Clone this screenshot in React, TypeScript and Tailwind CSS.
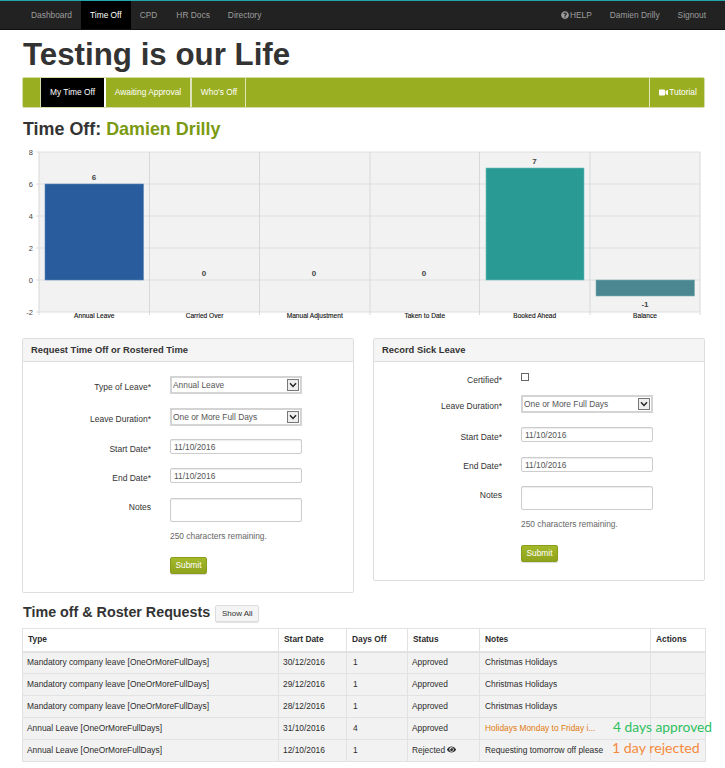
import React from "react";
import { FaQuestionCircle, FaVideo, FaEye } from "react-icons/fa";

const rows = [
  ["Mandatory company leave [OneOrMoreFullDays]", "30/12/2016", "1", "Approved", "Christmas Holidays"],
  ["Mandatory company leave [OneOrMoreFullDays]", "29/12/2016", "1", "Approved", "Christmas Holidays"],
  ["Mandatory company leave [OneOrMoreFullDays]", "28/12/2016", "1", "Approved", "Christmas Holidays"],
  ["Annual Leave [OneOrMoreFullDays]", "31/10/2016", "4", "Approved", "Holidays Monday to Friday i..."],
  ["Annual Leave [OneOrMoreFullDays]", "12/10/2016", "1", "Rejected", "Requesting tomorrow off please"],
];
const cellPad = ["pl-[4px]", "pl-[4px]", "pl-[6px]", "pl-[4px]", "pl-[5px]"];

function Chart() {
  const ys = [152, 184, 216, 248, 280, 312];
  const xs = [39, 149.5, 259.5, 370, 479.5, 590, 700];
  const labels = ["Annual Leave", "Carried Over", "Manual Adjustment", "Taken to Date", "Booked Ahead", "Balance"];
  const ticks = ["8", "6", "4", "2", "0", "-2"];
  const vals: [string, number, number][] = [
    ["6", 94, 178],
    ["0", 204, 274],
    ["0", 314, 274],
    ["0", 424, 274],
    ["7", 534.5, 162],
    ["-1", 645, 305],
  ];
  return (
    <svg viewBox="22 145 683 175" className="block w-[683px] h-[175px]" fontFamily="'Liberation Sans', sans-serif">
      <rect x="39" y="152" width="661" height="160" fill="#f2f2f2" />
      {ys.map((y) => (
        <line key={y} x1="36" x2="700" y1={y} y2={y} stroke="#dedede" strokeWidth="1" />
      ))}
      {xs.map((x) => (
        <line key={x} x1={x} x2={x} y1="152" y2="315" stroke="#d8d8d8" strokeWidth="1" />
      ))}
      <rect x="45" y="184" width="98.5" height="96" fill="#285c9c" stroke="#5c86b8" strokeWidth="0.6" />
      <rect x="486" y="168" width="98" height="112" fill="#2a9b94" stroke="#6dbdb7" strokeWidth="0.6" />
      <rect x="596" y="280" width="98.5" height="16" fill="#4a8791" stroke="#7fadb4" strokeWidth="0.6" />
      {ticks.map((t, i) => (
        <text key={t} x="33" y={ys[i] + 2.5} textAnchor="end" fontSize="7.5" fill="#444">
          {t}
        </text>
      ))}
      {vals.map(([v, x, y], i) => (
        <text key={i} x={x} y={y + 2} textAnchor="middle" fontSize="8" fill="#444" fontWeight="bold">
          {v}
        </text>
      ))}
      {labels.map((l, i) => (
        <text key={l} x={(xs[i] + xs[i + 1]) / 2} y="318" textAnchor="middle" fontSize="6.6" fill="#111" stroke="#111" strokeWidth="0.12">
          {l}
        </text>
      ))}
    </svg>
  );
}

function Label({ children, top = "pt-[4px]" }: { children: React.ReactNode; top?: string }) {
  return <div className={`w-[128px] mr-[19px] text-right text-[8.5px] leading-[13px] text-[#333] shrink-0 ${top}`}>{children}</div>;
}

function Sel({ value }: { value: string }) {
  return (
    <div className="relative w-[132px] h-[18px]">
      <select
        defaultValue={value}
        className="block appearance-none w-full h-full border-2 border-[#d4d4d4] bg-white pl-[1px] text-[8.4px] text-[#555] rounded-none outline-none"
      >
        <option>{value}</option>
      </select>
      <span className="absolute right-[3px] top-[3px] w-[12px] h-[12px] border border-[#777] bg-[#eee] flex items-center justify-center">
        <svg width="8" height="6" viewBox="0 0 8 6">
          <path d="M1 1.2 L4 4.4 L7 1.2" fill="none" stroke="#222" strokeWidth="1.4" />
        </svg>
      </span>
    </div>
  );
}

function TextBox({ value, h = "h-[15px]" }: { value: string; h?: string }) {
  return (
    <input
      readOnly
      value={value}
      className={`block w-[132px] ${h} border border-[#ccc] rounded-[2px] bg-white px-[3px] text-[8.4px] text-[#555] shadow-[inset_0_1px_1px_rgba(0,0,0,0.08)] outline-none`}
    />
  );
}

function Submit() {
  return (
    <button className="block w-[37px] h-[17px] rounded-[2px] border border-[#8a9c1c] bg-gradient-to-b from-[#a4b82a] to-[#8fa31c] text-white text-[8.4px] shadow-[0_1px_1px_rgba(0,0,0,0.15)]">
      Submit
    </button>
  );
}

function Panel({ title, children, className }: { title: string; children: React.ReactNode; className: string }) {
  return (
    <section className={`w-[332px] border border-[#ddd] rounded-[2px] ${className}`}>
      <div className="h-[23px] bg-[#f5f5f5] border-b border-[#ddd] pl-[8px] flex items-center text-[9.4px] font-bold text-[#333]">
        {title}
      </div>
      {children}
    </section>
  );
}

export default function App() {
  return (
    <div className="relative w-[725px] h-[768px] overflow-hidden bg-white font-['Liberation_Sans',sans-serif]">
      <nav className="h-[30px] bg-[#222] border-t-[1.5px] border-t-[#22a7ad] border-b border-b-[#111] flex justify-between text-[8.4px] text-[#9d9d9d] pl-[22px] pr-[10px]">
        <div className="flex">
          <a className="px-[9px] flex items-center">Dashboard</a>
          <a className="px-[9px] flex items-center bg-black text-white">Time Off</a>
          <a className="px-[9px] flex items-center">CPD</a>
          <a className="pl-[10px] pr-[9px] flex items-center">HR Docs</a>
          <a className="px-[9px] flex items-center">Directory</a>
        </div>
        <div className="flex">
          <a className="px-[9px] flex items-center">
            <FaQuestionCircle className="w-[8px] h-[8px] mr-[1px]" />
            HELP
          </a>
          <a className="px-[9px] flex items-center">Damien Drilly</a>
          <a className="px-[9px] flex items-center">Signout</a>
        </div>
      </nav>

      <div className="pl-[22px] pr-[20px]">
        <h1 className="h-[47px] flex items-center pt-[2px] pl-[1px] text-[31.3px] font-bold text-[#333] leading-none">Testing is our Life</h1>

        <div className="h-[31px] bg-[#9aae22] border border-[#d6dcaa] rounded-[2px] flex text-[8.4px] text-white">
          <div className="w-[18px] border-r border-[#d6dcaa]" />
          <a className="w-[65px] bg-black flex items-center justify-center border-r-2 border-white">My Time Off</a>
          <a className="w-[86px] flex items-center justify-center border-r-2 border-[#dfe5b8]">Awaiting Approval</a>
          <a className="w-[54px] pl-[1px] flex items-center justify-center border-r border-[#dfe5b8]">Who's Off</a>
          <a className="ml-auto w-[55px] pl-[2px] flex items-center justify-center border-l border-[#dfe5b8]">
            <FaVideo className="w-[9px] h-[9px] mr-[1px]" />
            Tutorial
          </a>
        </div>

        <h2 className="h-[37px] flex items-center pt-[6px] text-[17.9px] font-bold text-[#333] leading-none pl-[1px]">
          Time Off:&nbsp;<span className="text-[#7a9a12]">Damien Drilly</span>
        </h2>

        <Chart />

        <div className="mt-[18px] flex justify-between items-start">
          <Panel title="Request Time Off or Rostered Time" className="h-[255px]">
            <div className="pt-[14px]">
              <div className="flex h-[18px] items-center"><Label>Type of Leave*</Label><Sel value="Annual Leave" /></div>
              <div className="flex h-[18px] items-center mt-[14px]"><Label>Leave Duration*</Label><Sel value="One or More Full Days" /></div>
              <div className="flex h-[15px] items-center mt-[13px]"><Label top="pt-[5px]">Start Date*</Label><TextBox value="11/10/2016" /></div>
              <div className="flex h-[15px] items-center mt-[14px]"><Label top="pt-[5px]">End Date*</Label><TextBox value="11/10/2016" /></div>
              <div className="flex mt-[15px]"><Label top="pt-[3px]">Notes</Label><TextBox value="" h="h-[24px]" /></div>
              <div className="pl-[147px] mt-[9px] text-[8.4px] text-[#666] leading-[10px]">250 characters remaining.</div>
              <div className="pl-[147px] mt-[16px]"><Submit /></div>
            </div>
          </Panel>

          <Panel title="Record Sick Leave" className="h-[243px]">
            <div className="pt-[10px]">
              <div className="flex h-[14px]">
                <Label top="pt-[2px]">Certified*</Label>
                <span className="w-[8px] h-[8px] mt-[1px] border border-[#666] bg-white block" />
              </div>
              <div className="flex h-[18px] items-center mt-[9px]"><Label>Leave Duration*</Label><Sel value="One or More Full Days" /></div>
              <div className="flex h-[15px] items-center mt-[14px]"><Label top="pt-[5px]">Start Date*</Label><TextBox value="11/10/2016" /></div>
              <div className="flex h-[15px] items-center mt-[15px]"><Label top="pt-[4px]">End Date*</Label><TextBox value="11/10/2016" /></div>
              <div className="flex mt-[14px]"><Label top="pt-[3px]">Notes</Label><TextBox value="" h="h-[24px]" /></div>
              <div className="pl-[147px] mt-[9px] text-[8.4px] text-[#666] leading-[10px]">250 characters remaining.</div>
              <div className="pl-[147px] mt-[16px]"><Submit /></div>
            </div>
          </Panel>
        </div>

        <div className="mt-[12px] flex items-center h-[17px] pl-[1px]">
          <h2 className="text-[14.3px] font-bold text-[#333] leading-none pb-[2px]">Time off &amp; Roster Requests</h2>
          <button className="ml-[5px] w-[44px] h-[17px] border border-[#ddd] rounded-[2px] bg-[#f4f4f4] text-[8px] text-[#333] shadow-[0_1px_1px_rgba(0,0,0,0.12)]">
            Show All
          </button>
        </div>

        <table className="mt-[6px] w-[683px] table-fixed border-collapse text-[8.4px] text-[#2c2c2c]">
          <colgroup>
            <col className="w-[256px]" />
            <col className="w-[68px]" />
            <col className="w-[61px]" />
            <col className="w-[72px]" />
            <col className="w-[171px]" />
            <col className="w-[55px]" />
          </colgroup>
          <thead>
            <tr className="h-[23px] font-bold text-left">
              {["Type", "Start Date", "Days Off", "Status", "Notes", "Actions"].map((h) => (
                <th key={h} className="border border-[#e2e2e2] border-b-2 pl-[5px] font-bold">{h}</th>
              ))}
            </tr>
          </thead>
          <tbody>
            {rows.map((r, i) => (
              <tr key={i} className="h-[22px] bg-[#f2f2f2]">
                {r.map((c, j) => (
                  <td
                    key={j}
                    className={`border border-[#e2e2e2] whitespace-nowrap ${cellPad[j]} ${j === 4 && i === 3 ? "text-[#e07b10]" : ""}`}
                  >
                    {c}
                    {j === 3 && i === 4 && <FaEye className="inline w-[9px] h-[9px] ml-[2px] mb-[2px]" />}
                  </td>
                ))}
                <td className="border border-[#e2e2e2]" />
              </tr>
            ))}
          </tbody>
        </table>
      </div>

      <span className="absolute left-[613px] top-[717px] text-[13.8px] leading-[20px] text-[#2fc060] font-['Lato',sans-serif] whitespace-nowrap">4 days approved</span>
      <span className="absolute left-[612px] top-[738px] text-[14.2px] leading-[20px] text-[#f58a3c] font-['Lato',sans-serif] whitespace-nowrap">1 day rejected</span>
    </div>
  );
}
